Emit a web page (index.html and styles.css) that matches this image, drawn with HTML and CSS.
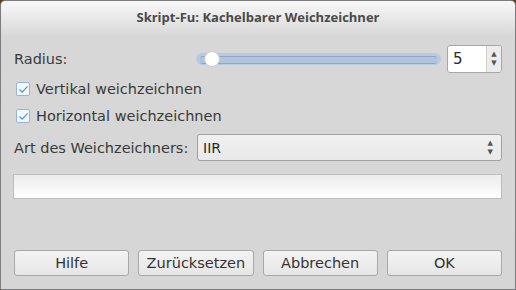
FILE: index.html
```html
<!DOCTYPE html>
<html lang="de">
<head>
    <meta charset="UTF-8">
    <title>Skript-Fu: Kachelbarer Weichzeichner</title>
    <link rel="stylesheet" href="styles.css">
</head>
<body>

    <div class="window">
        <!-- Title Bar -->
        <div class="title-bar">Skript-Fu: Kachelbarer Weichzeichner</div>

        <div class="content">
            <!-- Radius -->
            <div class="row radius-row">
                <span class="label radius-label">Radius:</span>
                <div class="slider">
                    <div class="groove"></div>
                    <div class="knob"></div>
                </div>
                <div class="spin">
                    <span class="spin-value">5</span>
                    <span class="spin-btns"><span>▲</span><span>▼</span></span>
                </div>
            </div>

            <!-- Checkboxes -->
            <label class="row check-row">
                <span class="checkbox">
                    <svg width="11" height="11" viewBox="0 0 11 11"><path d="M1.5 5.5 L4.2 8.2 L9.6 2.4" fill="none" stroke="#4a94e4" stroke-width="1.2"/></svg>
                </span>
                <span class="label">Vertikal weichzeichnen</span>
            </label>
            <label class="row check-row second">
                <span class="checkbox">
                    <svg width="11" height="11" viewBox="0 0 11 11"><path d="M1.5 5.5 L4.2 8.2 L9.6 2.4" fill="none" stroke="#4a94e4" stroke-width="1.2"/></svg>
                </span>
                <span class="label">Horizontal weichzeichnen</span>
            </label>

            <!-- Blur type -->
            <div class="row combo-row">
                <span class="label combo-label">Art des Weichzeichners:</span>
                <div class="combo">
                    <span class="combo-value">IIR</span>
                    <span class="combo-arrows"><span>▲</span><span>▼</span></span>
                </div>
            </div>

            <!-- Progress -->
            <div class="progress"></div>

            <!-- Buttons -->
            <div class="buttons">
                <button class="btn">Hilfe</button>
                <button class="btn">Zurücksetzen</button>
                <button class="btn">Abbrechen</button>
                <button class="btn">OK</button>
            </div>
        </div>
    </div>

</body>
</html>
```

FILE: styles.css
```css
* {
    margin: 0;
    padding: 0;
    box-sizing: border-box;
}

body {
    background-color: #5a3d22;
    width: 516px;
    height: 290px;
    overflow: hidden;
    font-family: "DejaVu Sans", sans-serif;
    font-size: 14.5px;
    color: #3a3a3a;
}

.window {
    width: 516px;
    height: 290px;
    border: 1px solid #7c7c7c;
    border-radius: 5px 5px 0 0;
    background: linear-gradient(to bottom, #f8f8f8 0px, #d7d7d7 36px, #d6d6d6 100%);
    display: flex;
    flex-direction: column;
}

/* Title Bar */
.title-bar {
    height: 35px;
    line-height: 32px;
    text-align: center;
    font-family: "Open Sans", sans-serif;
    font-weight: bold;
    font-size: 13px;
    color: #4a4a4a;
}

.content {
    flex: 1;
    display: flex;
    flex-direction: column;
    padding: 9px 13px 13px 12px;
}

.row {
    display: flex;
    align-items: center;
}

.label {
    white-space: nowrap;
}

.radius-row {
    height: 28px;
    margin-left: 1px;
}

.radius-label {
    width: 182px;
}

/* Slider */
.slider {
    position: relative;
    width: 245px;
    height: 14px;
    margin-right: 6px;
}

.groove {
    position: absolute;
    left: 0;
    right: 0;
    top: 1px;
    height: 12px;
    border-radius: 6px;
    background-color: #b8cbe2;
}

.groove::after {
    content: "";
    position: absolute;
    left: 4px;
    right: 4px;
    top: 3px;
    height: 6px;
    border-top: 1px solid #8ea6c4;
    border-bottom: 1px solid #8ea6c4;
    border-radius: 3px;
    background-color: #b0c4dd;
}

.knob {
    position: absolute;
    left: 8px;
    top: -1px;
    width: 16px;
    height: 16px;
    border-radius: 50%;
    background: #ffffff;
    border: 1px solid #c8c8c8;
}

/* Spin box */
.spin {
    display: flex;
    width: 55px;
    height: 28px;
    border: 1px solid #a6a6a6;
    border-radius: 3px;
    background-color: #ffffff;
    overflow: hidden;
}

.spin-value {
    flex: 1;
    padding-left: 5px;
    line-height: 26px;
    font-size: 15px;
    color: #2a2a2a;
}

.spin-btns, .combo-arrows {
    display: flex;
    flex-direction: column;
    justify-content: center;
    align-items: center;
    font-size: 7px;
    line-height: 9px;
    color: #555555;
}

.spin-btns {
    width: 15px;
    background-color: #ececec;
    border-left: 1px solid #d0d0d0;
}

/* Checkboxes */
.check-row {
    height: 22px;
    margin-top: 5px;
    margin-left: 3px;
}

.check-row.second {
    margin-top: 5px;
}

.checkbox {
    display: flex;
    align-items: center;
    justify-content: center;
    width: 14px;
    height: 14px;
    border: 1px solid #94b4de;
    border-radius: 2px;
    background-color: #f4f7fb;
    margin-right: 6px;
}

/* Combo */
.combo-row {
    height: 27px;
    margin-top: 7px;
    margin-left: 1px;
}

.combo-label {
    width: 183px;
}

.combo {
    flex: 1;
    display: flex;
    align-items: center;
    height: 27px;
    border: 1px solid #a2a2a2;
    border-radius: 3px;
    background: linear-gradient(to bottom, #f0f0f0, #e9e9e9);
    padding: 0 8px 0 5px;
}

.combo-value {
    flex: 1;
    font-size: 14px;
    color: #2a2a2a;
}

/* Progress */
.progress {
    height: 25px;
    margin-top: 13px;
    border: 1px solid #bdbdbd;
    background: linear-gradient(to bottom, #ececec, #ffffff);
}

/* Buttons */
.buttons {
    margin-top: auto;
    display: flex;
    gap: 9px;
    padding-left: 1px;
}

.btn {
    flex: 1;
    height: 26px;
    border: 1px solid #a8a8a8;
    border-radius: 3px;
    background: linear-gradient(to bottom, #f3f3f3, #e6e6e6);
    font-family: "DejaVu Sans", sans-serif;
    font-size: 14.5px;
    color: #333333;
}
```
